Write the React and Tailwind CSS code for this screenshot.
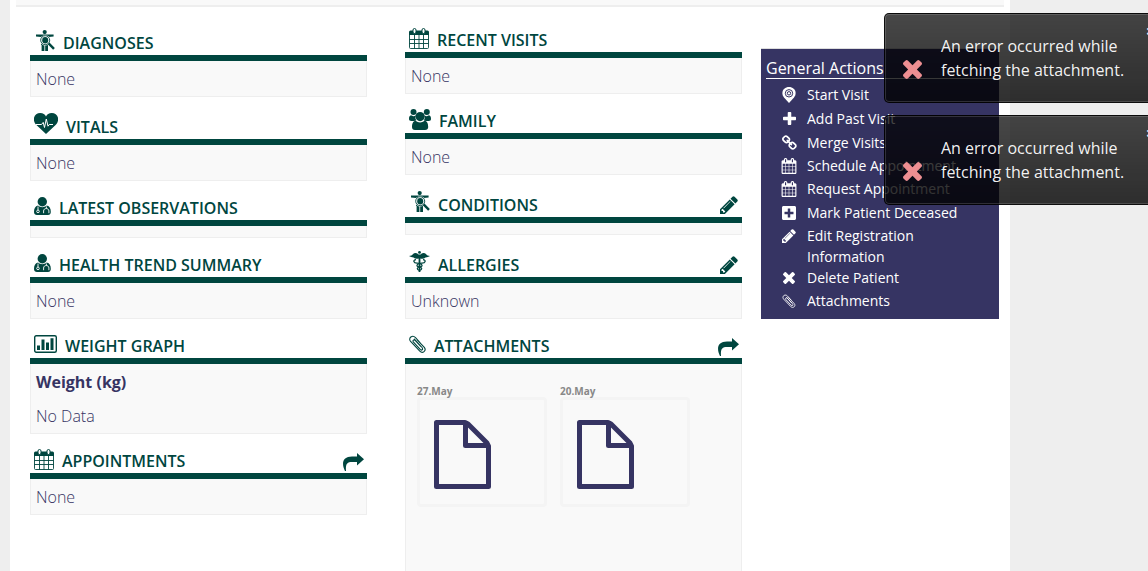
// File: src/App.jsx

import { FaPlusSquare } from 'react-icons/fa';

const BodyScanIcon = ({ className }) => (
    <svg viewBox="0 0 19 21" className={className} fill="currentColor" aria-hidden="true">
        <circle cx="8.7" cy="2.1" r="2.1" />
        <path d="M0 4.6H17.6V6.4L12.6 7V15H5V7L0 6.4Z" />
        <path d="M5.6 14H8.4V21H5.6ZM9.2 14H12V21H9.2Z" />
        <circle cx="9.2" cy="10.2" r="5.2" fill="#fff" />
        <circle cx="9.2" cy="10.2" r="4.5" fill="none" stroke="currentColor" strokeWidth="0.9" />
        <ellipse cx="9.2" cy="10.2" rx="3" ry="3.3" />
        <path d="M12.6 13.4L18 18.8" stroke="currentColor" strokeWidth="2.4" />
    </svg>
);

const HeartbeatIcon = ({ className }) => (
    <svg viewBox="0 0 24 21" className={className} fill="currentColor" aria-hidden="true">
        <path d="M12 21L2.4 12C-3 6 1 0 6.2 0C9.2 0 11 1.5 12 3.4C13 1.5 14.8 0 17.8 0C23 0 27 6 21.6 12Z" />
        <path d="M2 11.5H7.5L9.2 9.4L10.5 14.5L12.3 6L14 13.2L15.3 11.5H19" fill="none" stroke="#fff" strokeWidth="1" />
    </svg>
);

const DoctorIcon = ({ className }) => (
    <svg viewBox="0 0 17 18" className={className} fill="currentColor" aria-hidden="true">
        <circle cx="8.3" cy="4.7" r="4.7" />
        <path d="M4 8.5C6.6 10.7 10 10.7 12.8 8.5C15.7 9.2 16.8 11.5 16.8 15C16.8 17 15.7 18 14 18H3C1.2 18 0 17 0 15C0 11.5 1.2 9.2 4 8.5Z" />
        <path d="M4 9.5V13M12.4 9.5V11.5M9.6 16.2V14C9.6 10.7 14.9 10.7 14.9 14V16.2" fill="none" stroke="#fff" strokeWidth="0.9" />
        <circle cx="4" cy="14.4" r="1.3" fill="none" stroke="#fff" strokeWidth="0.9" />
    </svg>
);

const GroupIcon = ({ className }) => (
    <svg viewBox="0 0 22 21" className={className} fill="currentColor" aria-hidden="true">
        <circle cx="4.5" cy="3" r="3" />
        <circle cx="17.8" cy="3" r="3" />
        <path d="M2 6.3Q4.5 8 7 6.2Q5.5 9 7.3 11.5L5 12H2.5C.8 12 0 11.2 0 10C0 8 .5 6.6 2 6.3ZM20 6.3Q17.8 8 15.3 6.2Q16.5 9 14.9 11.5L17 12H19.7C21.3 12 22 11.2 22 10C22 8 21.5 6.6 20 6.3Z" />
        <circle cx="11.1" cy="7.6" r="4.6" />
        <path d="M6.5 11.7Q11 15.3 15.7 11.7C18.4 12 19.2 15 19.2 18C19.2 20 18 21 16 21H6C4 21 3 20 3 18C3 15 3.9 12 6.5 11.7Z" />
    </svg>
);

const CaduceusIcon = ({ className }) => (
    <svg viewBox="0 0 21 21" className={className} fill="currentColor" aria-hidden="true">
        <circle cx="10.5" cy="1.4" r="1.4" />
        <path d="M0 5Q3 5 5 2.3Q8 1.2 9.5 3.5H11.5Q13 1.2 16 2.3Q18 5 21 5Q19 6.3 16.5 6.5Q14.5 8.2 11.4 7.5V21H9.6V7.5Q6.5 8.2 4.5 6.5Q2 6.3 0 5Z" />
        <path d="M7 8.6C3.5 9 4.5 12 8 12.2C14 12.8 14.5 15.5 10.5 16C7.5 16.5 7.5 18.5 10.5 19.5M14 8.6C17.5 9 16.5 12 13 12.2C7 12.8 6.5 15.5 10.5 16C13.5 16.5 13.5 18.5 10.5 19.5" fill="none" stroke="currentColor" strokeWidth="1.2" />
    </svg>
);

const ChartIcon = ({ className }) => (
    <svg viewBox="0 0 23 18" className={className} fill="currentColor" aria-hidden="true">
        <rect x="0.7" y="0.7" width="21.6" height="16.6" rx="1.5" fill="none" stroke="currentColor" strokeWidth="1.4" />
        <path d="M3 10.5H6V15H3ZM7.5 4.5H10.5V15H7.5ZM12 7.5H15V15H12ZM16.5 3.2H19.5V15H16.5Z" />
    </svg>
);

// Large calendar with a hairline grid, used in the section headers
const CalendarGridIcon = ({ className }) => (
    <svg viewBox="0 0 20 21" className={className} aria-hidden="true">
        <path d="M1.5 2.5H18.5Q20 2.5 20 4V7H0V4Q0 2.5 1.5 2.5Z" fill="currentColor" />
        <path d="M0.5 6V19.5Q0.5 20.5 1.5 20.5H18.500Q19.5 20.5 19.5 19.5V6M0.500 11.5H19.5M0.5 15.5H19.5M5.5 7V20.5M10 7V20.5M14.5 7V20.5" fill="none" stroke="currentColor" strokeWidth="0.9" />
        <rect x="4" y="0.5" width="3" height="5" rx="1.5" fill="#fff" stroke="currentColor" strokeWidth="1" />
        <rect x="13" y="0.5" width="3" height="5" rx="1.5" fill="#fff" stroke="currentColor" strokeWidth="1" />
    </svg>
);

const CalendarIcon = ({ className }) => (
    <svg viewBox="64 0 1664 1792" className={className} fill="currentColor" aria-hidden="true">
        <path d="M192 1664h288v-288h-288v288zm352 0h320v-288h-320v288zm-352-352h288v-320h-288v320zm352 0h320v-320h-320v320zm-352-384h288v-288h-288v288zm736 736h320v-288h-320v288zm-384-736h320v-288h-320v288zm768 736h288v-288h-288v288zm-384-352h320v-320h-320v320zm-352-864v-288q0-13-9.5-22.5t-22.5-9.5h-64q-13 0-22.5 9.5t-9.5 22.5v288q0 13 9.5 22.5t22.5 9.5h64q13 0 22.5-9.5t9.5-22.5zm736 864h288v-320h-288v320zm-384-384h320v-288h-320v288zm384 0h288v-288h-288v288zm32-480v-288q0-13-9.5-22.5t-22.5-9.5h-64q-13 0-22.5 9.5t-9.5 22.5v288q0 13 9.5 22.5t22.5 9.5h64q13 0 22.5-9.5t9.5-22.5zm384-64v1280q0 52-38 90t-90 38h-1408q-52 0-90-38t-38-90v-1280q0-52 38-90t90-38h128v-96q0-66 47-113t113-47h64q66 0 113 47t47 113v96h384v-96q0-66 47-113t113-47h64q66 0 113 47t47 113v96h128q52 0 90 38t38 90z" />
    </svg>
);

const PaperclipIcon = ({ className }) => (
    <svg viewBox="0 0 17 18" className={className} fill="none" stroke="currentColor" strokeWidth="1.1" strokeLinecap="round" aria-hidden="true">
        <path d="M11 7.5L6.5 2.6C3.5-.6-1.3 3 1.6 6.5L10.8 16.2C13.6 19 17.8 15.6 15.3 12.4L8.2 4.8M5.4 4.2L13 12.5C14.5 14.6 12.6 15.8 11.2 14.4L4.5 7.2C3.2 5.5 5 4 6.4 5.5L11.8 11.4" />
    </svg>
);

const PencilIcon = ({ className }) => (
    <svg viewBox="128 128 1536 1536" className={className} fill="currentColor" aria-hidden="true">
        <path d="M491 1536l91-91-235-235-91 91v107h128v128h107zm523-928q0-22-22-22-10 0-17 7l-542 542q-7 7-7 17 0 22 22 22 10 0 17-7l542-542q7-7 7-17zm-54-192l416 416-832 832h-416v-416zm683 96q0 53-37 90l-166 166-416-416 166-165q36-38 90-38 53 0 91 38l235 234q37 39 37 91z" />
    </svg>
);

const ShareIcon = ({ className }) => (
    <svg viewBox="0 0 21 18" className={className} fill="currentColor" aria-hidden="true">
        <path d="M2 18C-2 10 0 3.500 9 3.5H14V0L21 6.3L14 12.6V9H9C4 9 2.5 11 3 18Z" />
    </svg>
);

const MarkerIcon = ({ className }) => (
    <svg viewBox="0 0 14 16" className={className} fill="none" stroke="currentColor" aria-hidden="true">
        <path d="M7 16L2 10.5C-2 5 2 0 7 0S16 5 12 10.5Z" fill="currentColor" stroke="none" />
        <circle cx="7" cy="6.3" r="3.7" stroke="#363463" strokeWidth="1" />
        <circle cx="7" cy="6.3" r="1.7" stroke="#363463" strokeWidth="1" />
    </svg>
);

const PlusIcon = ({ className }) => (
    <svg viewBox="192 128 1408 1408" className={className} fill="currentColor" aria-hidden="true">
        <path d="M1600 736v192q0 40-28 68t-68 28h-416v416q0 40-28 68t-68 28h-192q-40 0-68-28t-28-68v-416h-416q-40 0-68-28t-28-68v-192q0-40 28-68t68-28h416v-416q0-40 28-68t68-28h192q40 0 68 28t28 68v416h416q40 0 68 28t28 68z" />
    </svg>
);

const LinkIcon = ({ className }) => (
    <svg viewBox="16 0 1664 1664" className={className} fill="currentColor" aria-hidden="true">
        <path d="M1456 1216q0-40-28-68l-208-208q-28-28-68-28-42 0-72 32 3 3 19 18.5t21.5 21.5 15 19 13 25.5 3.5 27.5q0 40-28 68t-68 28q-15 0-27.5-3.5t-25.5-13-19-15-21.5-21.5-18.5-19q-33 31-33 73 0 40 28 68l206 207q27 27 68 27 40 0 68-26l147-146q28-28 28-67zm-703-705q0-40-28-68l-206-207q-28-28-68-28-39 0-68 27l-147 146q-28 28-28 67 0 40 28 68l208 208q27 27 68 27 42 0 72-31-3-3-19-18.5t-21.5-21.5-15-19-13-25.5-3.5-27.5q0-40 28-68t68-28q15 0 27.5 3.5t25.5 13 19 15 21.5 21.5 18.5 19q33-31 33-73zm895 705q0 120-85 203l-147 146q-83 83-203 83-121 0-204-85l-206-207q-83-83-83-203 0-123 88-209l-88-88q-86 88-208 88-120 0-204-84l-208-208q-84-84-84-204t85-203l147-146q83-83 203-83 121 0 204 85l206 207q83 83 83 203 0 123-88 209l88 88q86-88 208-88 120 0 204 84l208 208q84 84 84 204z" />
    </svg>
);

const TimesIcon = ({ className }) => (
    <svg viewBox="302 366 1188 1188" className={className} fill="currentColor" aria-hidden="true">
        <path d="M1490 1322q0 40-28 68l-136 136q-28 28-68 28t-68-28l-294-294-294 294q-28 28-68 28t-68-28l-136-136q-28-28-28-68t28-68l294-294-294-294q-28-28-28-68t28-68l136-136q28-28 68-28t68 28l294 294 294-294q28-28 68-28t68 28l136 136q28 28 28 68t-28 68l-294 294 294 294q28 28 28 68z" />
    </svg>
);

const FileIcon = ({ className }) => (
    <svg viewBox="0 0 57 69" className={className} fill="none" stroke="currentColor" strokeWidth="5" strokeLinejoin="round" aria-hidden="true">
        <path d="M2.5 2.5H31L34 4L53 23L54.5 26V66.5H2.5ZM31.5 3V25.5H54" />
    </svg>
);

const Section = ({ title, icon: Icon, iconClass, tall, action, children }) => (
    <section>
        <div className={`flex items-end border-b-6 border-[#00463f] pl-1 text-[#00463f] ${tall ? 'h-12' : 'h-[45px]'}`}>
            <Icon className={`mr-2 shrink-0 ${iconClass}`} />
            <h3 className="text-base leading-6 font-semibold uppercase">{title}</h3>
            {action === 'edit' && (
                <a href="#edit" aria-label={`Edit ${title}`} className="mb-[3px] mr-1 ml-auto">
                    <PencilIcon className="h-[18px] w-[18px]" />
                </a>
            )}
            {action === 'share' && (
                <a href="#open" aria-label={`Open ${title}`} className="mb-0.5 mr-[3px] ml-auto">
                    <ShareIcon className="h-[18px] w-[21px]" />
                </a>
            )}
        </div>
        <div className="min-h-3 border border-t-0 border-[#eee] bg-[#f9f9f9] px-[5px] font-light">{children}</div>
    </section>
);

const Line = ({ children }) => <p className="pt-1.5 pb-[5px] leading-6">{children}</p>;

const Attachment = ({ date }) => (
    <figure>
        <figcaption className="text-[10px] leading-3 font-bold text-[#888]">{date}</figcaption>
        <button type="button" aria-label={`Attachment ${date}`} className="block h-[110px] w-[130px] rounded border-3 border-[#f4f4f4] pt-1 pl-3.5">
            <FileIcon className="h-[69px] w-[57px]" />
        </button>
    </figure>
);

const actions = [
    { label: 'Start Visit', icon: MarkerIcon, size: 'w-3.5 h-4', pad: 'pb-[3px]' },
    { label: 'Add Past Visit', icon: PlusIcon, size: 'w-[13px] h-[13px]', pad: 'pb-[3px]' },
    { label: 'Merge Visits', icon: LinkIcon, size: 'w-[15px] h-[15px]', pad: 'pb-0.5' },
    { label: 'Schedule Appointment', icon: CalendarIcon, size: 'w-4 h-4', pad: 'pb-0.5' },
    { label: 'Request Appointment', icon: CalendarIcon, size: 'w-4 h-4', pad: 'pb-[3px]' },
    { label: 'Mark Patient Deceased', icon: FaPlusSquare, size: 'w-4 h-4', pad: 'pb-0.5' },
    { label: 'Edit Registration Information', icon: PencilIcon, size: 'w-3.5 h-3.5', pad: '' },
    { label: 'Delete Patient', icon: TimesIcon, size: 'w-3 h-3', pad: 'pb-0.5' },
    { label: 'Attachments', icon: PaperclipIcon, size: 'w-3.5 h-3.5', pad: '' },
];

const GeneralActions = () => (
    <aside className="mt-[41px] w-[238px] self-start border-t border-[#ddd] text-white">
        <div className="bg-[#363463] pt-[9px] pb-2 pl-[5px]">
            <h3 className="border-b border-white text-base leading-5">General Actions</h3>
            <ul className="pt-[5px] pl-[15px] text-sm leading-[21px]">
                {actions.map(({ label, icon: Icon, size, pad }) => (
                    <li key={label} className={pad}>
                        <a href="#action" className="flex pr-12">
                            <span className="mr-2.5 flex h-[21px] w-4 shrink-0 items-center justify-center">
                                <Icon className={size} />
                            </span>
                            <span className={label.startsWith('Edit') ? '' : 'whitespace-nowrap'}>{label}</span>
                        </a>
                    </li>
                ))}
            </ul>
        </div>
    </aside>
);

const Toast = () => (
    <div
        role="alert"
        className="relative rounded-[5px] border border-black/80 bg-linear-to-b from-black/72 to-black/81 py-5 pl-14 text-base leading-6 text-white/95 inset-ring inset-ring-white/15"
    >
        <TimesIcon className="absolute top-[46px] left-[18px] h-[19px] w-[19px] text-[#ee8f92]" />
        <p className="w-[190px]">An error occurred while fetching the attachment.</p>
        <button type="button" aria-label="Close" className="absolute top-[5px] right-3 text-base leading-6 font-bold">
            ×
        </button>
    </div>
);

export default function App() {
    return (
        <div className="relative h-screen overflow-hidden bg-[#eee] pl-2.5 font-['Open_Sans','Noto_Sans',sans-serif] text-base text-[#363463]">
            <main className="min-h-screen max-w-[1000px] bg-white px-1.5">
                <div className="h-[7px] border-b-2 border-[#eee] bg-[#f9f9f9]" />
                <div className="flex pr-[5px] pl-3.5">
                    <div className="min-w-0 flex-1 pt-1.5">
                        <Section title="Diagnoses" icon={BodyScanIcon} iconClass="mb-1 ml-0.5 h-[21px] w-[19px]" tall>
                            <Line>None</Line>
                        </Section>
                        <Section title="Vitals" icon={HeartbeatIcon} iconClass="mb-[5px] h-[21px] w-6" tall>
                            <Line>None</Line>
                        </Section>
                        <Section title="Latest Observations" icon={DoctorIcon} iconClass="mb-[5px] h-[18px] w-[17px]" />
                        <Section title="Health Trend Summary" icon={DoctorIcon} iconClass="mb-[5px] h-[18px] w-[17px]">
                            <Line>None</Line>
                        </Section>
                        <Section title="Weight Graph" icon={ChartIcon} iconClass="mb-[5px] h-[18px] w-[23px]">
                            <p className="pt-1.5 leading-6 font-bold">Weight (kg)</p>
                            <p className="pt-2.5 pb-[5px] leading-6">No Data</p>
                        </Section>
                        <Section title="Appointments" icon={CalendarGridIcon} iconClass="mb-[3px] h-[21px] w-5" action="share">
                            <Line>None</Line>
                        </Section>
                    </div>

                    <div className="ml-[38px] min-w-0 flex-1 pt-1.5">
                        <Section title="Recent Visits" icon={CalendarGridIcon} iconClass="mb-[3px] h-[21px] w-5">
                            <Line>None</Line>
                        </Section>
                        <Section title="Family" icon={GroupIcon} iconClass="mb-[3px] h-[21px] w-[22px]">
                            <Line>None</Line>
                        </Section>
                        <Section title="Conditions" icon={BodyScanIcon} iconClass="mb-[5px] ml-0.5 h-[21px] w-[19px]" tall action="edit" />
                        <Section title="Allergies" icon={CaduceusIcon} iconClass="mb-[5px] h-[21px] w-[21px]" tall action="edit">
                            <Line>Unknown</Line>
                        </Section>
                        <Section title="Attachments" icon={PaperclipIcon} iconClass="mb-[5px] h-[18px] w-[17px]" action="share">
                            <div className="flex min-h-[300px] gap-[13px] pt-[21px] pl-1.5">
                                <Attachment date="27.May" />
                                <Attachment date="20.May" />
                            </div>
                        </Section>
                    </div>

                    <div className="ml-[19px]">
                        <GeneralActions />
                    </div>
                </div>
            </main>

            {/* Toasts float over the page and run past its right edge */}
            <div className="absolute top-[13px] -right-5 flex w-[284px] flex-col gap-3">
                <Toast />
                <Toast />
            </div>
        </div>
    );
}
